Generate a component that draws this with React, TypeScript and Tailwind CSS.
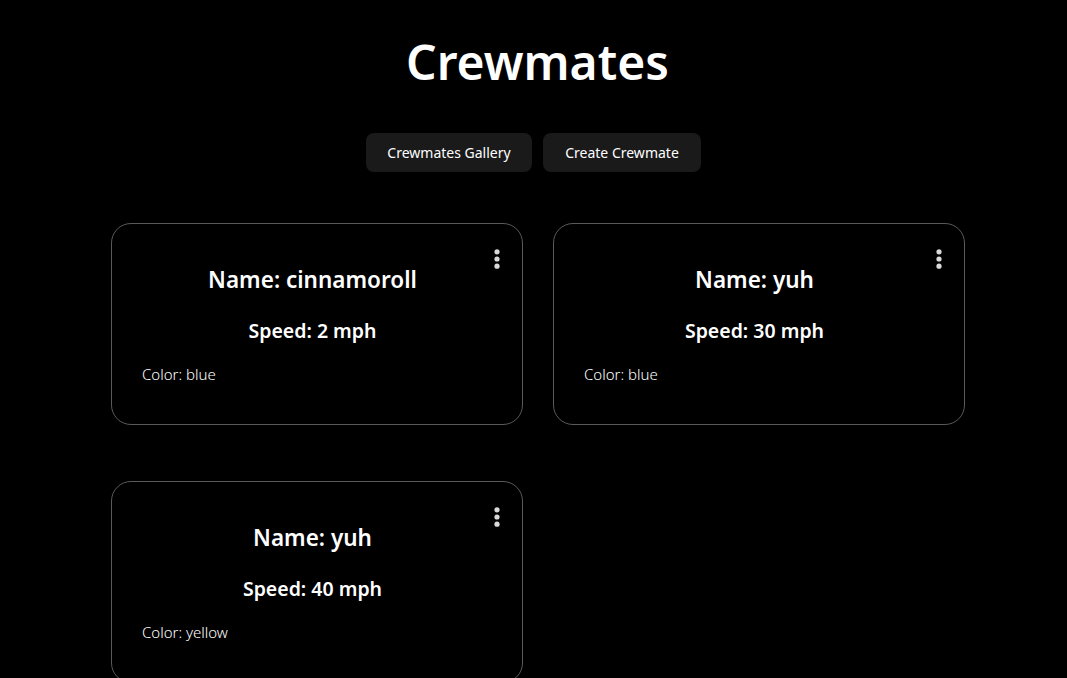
import React from "react";

const crew = [
  { name: "cinnamoroll", speed: 2, color: "blue" },
  { name: "yuh", speed: 30, color: "blue" },
  { name: "yuh", speed: 40, color: "yellow" },
];

function Dots() {
  return (
    <svg width="6" height="20" viewBox="0 0 6 20" className="absolute right-[22px] top-[25px]">
      <circle cx="3" cy="2.8" r="2.6" fill="#d9d9d9" />
      <circle cx="3" cy="10" r="2.6" fill="#d9d9d9" />
      <circle cx="3" cy="17.2" r="2.6" fill="#d9d9d9" />
    </svg>
  );
}

export default function App() {
  return (
    <div
      className="min-h-[678px] bg-black text-white"
      style={{ fontFamily: "'Noto Sans', Lato, Arial, sans-serif" }}
    >
      <div className="flex flex-col items-center pt-[32px]">
        <h1 className="ml-[8px] text-[48px] leading-[60px] font-semibold">Crewmates</h1>
        <div className="mt-[41px] flex gap-[11px]">
          <button className="h-[39px] w-[166px] rounded-[8px] bg-[#1a1a1a] text-[14px] text-white">
            Crewmates Gallery
          </button>
          <button className="h-[39px] w-[158px] rounded-[8px] bg-[#1a1a1a] text-[14px] text-white">
            Create Crewmate
          </button>
        </div>
      </div>
      <div className="ml-[111px] mt-[51px] grid w-[854px] grid-cols-2 gap-x-[30px] gap-y-[56px]">
        {crew.map((c, i) => (
          <div
            key={i}
            className="relative h-[202px] rounded-[20px] border border-[#5a5a5a] pl-[30px] pr-[39px]"
          >
            <Dots />
            <div className="pt-[41px] text-center text-[22.5px] font-semibold leading-[30px]">
              Name: {c.name}
            </div>
            <div className="mt-[22px] text-center text-[19.5px] font-semibold leading-[28px]">
              Speed: {c.speed} mph
            </div>
            <div className="mt-[19px] text-[15px] font-light leading-[20px] text-white">
              Color: {c.color}
            </div>
          </div>
        ))}
      </div>
    </div>
  );
}
